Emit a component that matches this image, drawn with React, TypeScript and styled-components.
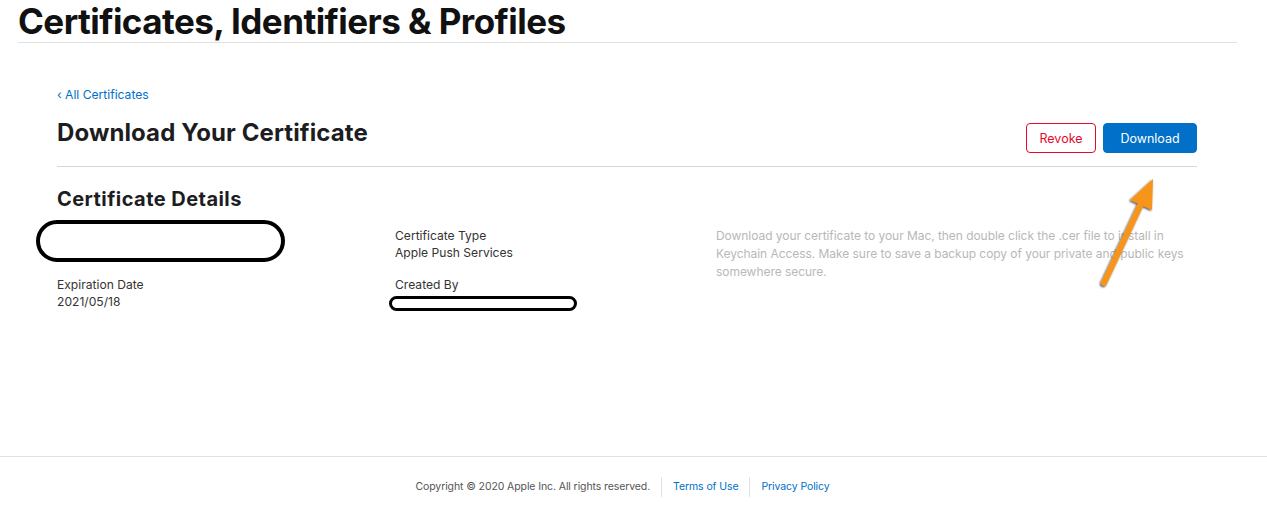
import React from "react";
import styled, { createGlobalStyle } from "styled-components";

const GlobalStyle = createGlobalStyle`
  html, body { margin: 0; padding: 0; background: #fff; }
  body {
    font-family: Inter, "Helvetica Neue", "Liberation Sans", Arial, sans-serif;
    color: #333;
    -webkit-font-smoothing: antialiased;
  }
  * { box-sizing: border-box; }
`;

const Page = styled.div`
  position: relative;
  width: 1267px;
  min-height: 512px;
  display: flex;
  flex-direction: column;
`;

const Header = styled.header`
  margin: 0 30px 0 18px;
  border-bottom: 1px solid #e0e0e0;
`;

const SiteTitle = styled.h1`
  margin: 0;
  font-size: 35px;
  line-height: 42px;
  font-weight: 700;
  color: #111;
  letter-spacing: -0.55px;
`;

const Main = styled.main`
  padding: 0 70px 0 57px;
  min-height: 413px;
`;

const BackLink = styled.a`
  display: block;
  margin-top: 43px;
  font-size: 12.1px;
  line-height: 18px;
  color: #0070c9;
  text-decoration: none;
`;

const TitleRow = styled.div`
  display: flex;
  justify-content: space-between;
  align-items: flex-start;
  margin-top: 14px;
  padding-bottom: 13px;
  border-bottom: 1px solid #d6d6d6;
`;

const PageTitle = styled.h2`
  margin: 0;
  font-size: 24px;
  line-height: 30px;
  font-weight: 700;
  color: #1d1d1f;
  letter-spacing: 0.1px;
`;

const Actions = styled.div`
  display: flex;
  gap: 7px;
  margin-top: 5px;
`;

const Button = styled.button<{ $variant: "danger" | "primary" }>`
  height: 30px;
  padding: 0;
  width: ${(p) => (p.$variant === "danger" ? "70px" : "94px")};
  border-radius: 4px;
  font-family: inherit;
  font-size: 12.5px;
  cursor: pointer;
  border: 1px solid ${(p) => (p.$variant === "danger" ? "#e30b2a" : "#0070c9")};
  background: ${(p) => (p.$variant === "danger" ? "#fff" : "#0070c9")};
  color: ${(p) => (p.$variant === "danger" ? "#e30b2a" : "#fff")};
`;

const SectionTitle = styled.h3`
  margin: 20px 0 0;
  font-size: 20px;
  line-height: 24px;
  font-weight: 700;
  color: #1d1d1f;
  letter-spacing: 0.45px;
`;

const DetailsGrid = styled.div`
  display: grid;
  grid-template-columns: 338px 321px 1fr;
  grid-template-rows: 34px 34px;
  row-gap: 15px;
  margin-top: 16px;
`;

const Field = styled.div`
  position: relative;
  font-size: 12.1px;
  line-height: 17px;
`;

const Label = styled.div`
  color: #333;
`;

const Value = styled.div`
  color: #333;
`;

const Redaction = styled.div<{ $left: number; $top: number; $w: number; $h: number; $b: number }>`
  position: absolute;
  left: ${(p) => p.$left}px;
  top: ${(p) => p.$top}px;
  width: ${(p) => p.$w}px;
  height: ${(p) => p.$h}px;
  border: ${(p) => p.$b}px solid #000;
  border-radius: ${(p) => p.$h / 2}px;
  background: #fff;
`;

const Description = styled.p`
  grid-column: 3;
  grid-row: 1 / span 2;
  margin: 0;
  font-size: 12px;
  line-height: 18px;
  letter-spacing: -0.05px;
  color: #b8b8b8;
`;

const Footer = styled.footer`
  border-top: 1px solid #e2e2e2;
  padding: 20px 22px 15px 0;
  display: flex;
  justify-content: center;
  align-items: center;
  font-size: 10.5px;
  line-height: 20px;
  letter-spacing: -0.1px;
`;

const FooterItem = styled.span<{ $link?: boolean }>`
  padding: 0 11px;
  color: ${(p) => (p.$link ? "#0070c9" : "#555")};
  & + & {
    border-left: 1px solid #e2e2e2;
  }
`;

const ArrowLayer = styled.svg`
  position: absolute;
  left: 0;
  top: 0;
  pointer-events: none;
  overflow: visible;
`;

export default function App() {
  return (
    <>
      <GlobalStyle />
      <Page>
        <Header>
          <SiteTitle>Certificates, Identifiers &amp; Profiles</SiteTitle>
        </Header>
        <Main>
          <BackLink href="#">‹ All Certificates</BackLink>
          <TitleRow>
            <PageTitle>Download Your Certificate</PageTitle>
            <Actions>
              <Button $variant="danger">Revoke</Button>
              <Button $variant="primary">Download</Button>
            </Actions>
          </TitleRow>
          <SectionTitle>Certificate Details</SectionTitle>
          <DetailsGrid>
            <Field>
              <Label>Certificate Name</Label>
              <Value>&nbsp;</Value>
              <Redaction $left={-21} $top={-7} $w={249} $h={42} $b={4} />
            </Field>
            <Field>
              <Label>Certificate Type</Label>
              <Value>Apple Push Services</Value>
            </Field>
            <Description>
              Download your certificate to your Mac, then double click the .cer file to install in
              Keychain Access. Make sure to save a backup copy of your private and public keys
              somewhere secure.
            </Description>
            <Field>
              <Label>Expiration Date</Label>
              <Value>2021/05/18</Value>
            </Field>
            <Field>
              <Label>Created By</Label>
              <Value>&nbsp;</Value>
              <Redaction $left={-6} $top={20} $w={188} $h={15} $b={3.5} />
            </Field>
          </DetailsGrid>
        </Main>
        <Footer>
          <FooterItem>Copyright © 2020 Apple Inc. All rights reserved.</FooterItem>
          <FooterItem $link>Terms of Use</FooterItem>
          <FooterItem $link>Privacy Policy</FooterItem>
        </Footer>
        <ArrowLayer width="1267" height="512" viewBox="0 0 1267 512">
          <defs>
            <filter id="arrowShadow" x="-50%" y="-50%" width="200%" height="200%">
              <feDropShadow dx="-1" dy="1" stdDeviation="0.8" floodColor="#000" floodOpacity="0.75" />
            </filter>
          </defs>
          <g filter="url(#arrowShadow)">
            <line x1="1104" y1="283" x2="1141" y2="204" stroke="#f7941d" strokeWidth="6" strokeLinecap="round" />
            <polygon points="1153,179 1130,200 1152,210" fill="#f7941d" />
          </g>
        </ArrowLayer>
      </Page>
    </>
  );
}
